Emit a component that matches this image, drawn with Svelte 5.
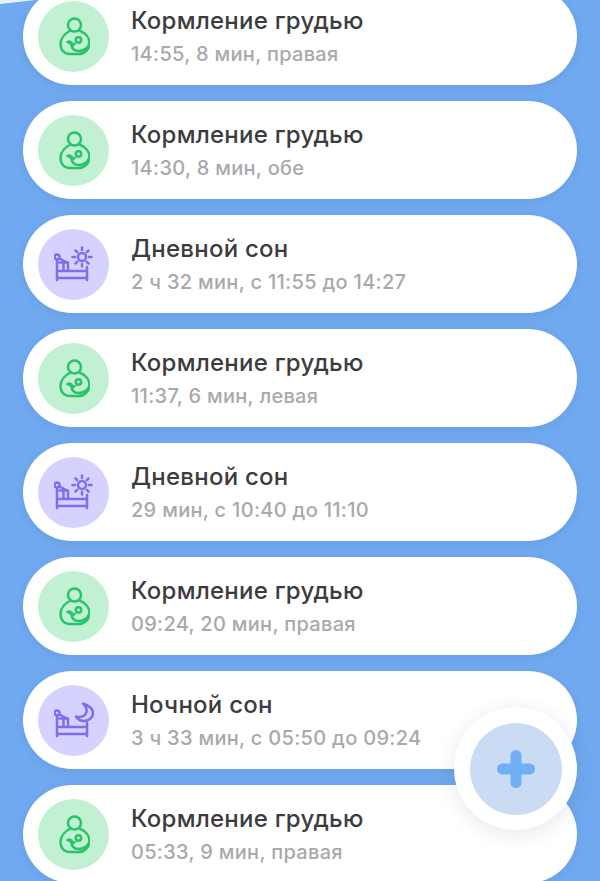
<script>
	const FEED = 'Кормление грудью';
	const DAY = 'Дневной сон';
	const NIGHT = 'Ночной сон';

	const entries = [
		{ kind: 'feed', title: FEED, detail: '14:55, 8 мин, правая' },
		{ kind: 'feed', title: FEED, detail: '14:30, 8 мин, обе' },
		{ kind: 'day', title: DAY, detail: '2 ч 32 мин, с 11:55 до 14:27' },
		{ kind: 'feed', title: FEED, detail: '11:37, 6 мин, левая' },
		{ kind: 'day', title: DAY, detail: '29 мин, с 10:40 до 11:10' },
		{ kind: 'feed', title: FEED, detail: '09:24, 20 мин, правая' },
		{ kind: 'night', title: NIGHT, detail: '3 ч 33 мин, с 05:50 до 09:24' },
		{ kind: 'feed', title: FEED, detail: '05:33, 9 мин, правая' }
	];
</script>

{#snippet bed()}
	<circle cx="3" cy="11" r="2.500" />
	<path d="M3 13.500V34M3 25h30v7H3M33 21v13M5.500 12.500L14 17v8M5.500 16.500H14M9.500 16.500V25" />
{/snippet}

<main class="screen">
	<ul class="list">
		{#each entries as entry}
			<li class="card">
				<div class="badge {entry.kind}">
					{#if entry.kind === 'feed'}
						<svg width="33" height="39" viewBox="-1.500 0 33 39" fill="none">
							<circle cx="16" cy="8" r="6.500" />
							<path d="M12 13.500C7 16 2 21 2 27c0 6 4 10 9 10h9c6 0 11-5 11-11 0-5-4-10-10-12.500" />
							<path d="M31 26c-1 5-6 8-11 8-3 0-5-1-6-3" />
							<path d="M14 31c0-3-1-5-5-6M9 25c2-1 4 0 5 2M13 29l3-2" />
							<circle cx="20" cy="23" r="2.700" />
						</svg>
					{:else if entry.kind === 'day'}
						<svg width="40" height="36" viewBox="0 0 40 36" fill="none">
							{@render bed()}
							<circle cx="28" cy="11" r="4" />
							<path d="M28 1.500v2.500M28 18v2.500M18.500 11H21M35 11h2.500M21.500 4.500l1.700 1.700M32.800 15.800l1.700 1.700M21.500 17.500l1.700-1.700M32.800 6.200l1.700-1.700" />
						</svg>
					{:else}
						<svg width="40" height="36" viewBox="0 0 40 36" fill="none">
							{@render bed()}
							<path d="M29 1.500C35 3 39 7 39 11C39 16 34 19.500 29 19C26 18.700 23.500 17 22 14.500C27 16 31 14 32.500 10C33 7 31.500 3.500 29 1.500Z" />
						</svg>
					{/if}
				</div>
				<div class="text">
					<h3>{entry.title}</h3>
					<p>{entry.detail}</p>
				</div>
			</li>
		{/each}
	</ul>

	<button class="fab" aria-label="Добавить">
		<span class="fab-inner">
			<svg width="38" height="38" viewBox="0 0 38 38">
				<path d="M19 5.500v27M5.500 19h27" />
			</svg>
		</span>
	</button>
</main>

<style>
	:global(body) {
		background: #70a9ef;
		overflow: hidden;
	}

	.screen {
		position: relative;
		height: 881px;
		overflow: hidden;
		background: #70a9ef;
		font-family: Inter, 'Noto Sans', sans-serif;
	}

	/* sliver of the sheet above that peeks out in the top corner */
	.screen::before {
		content: '';
		position: absolute;
		left: 0;
		top: 0;
		width: 100%;
		height: 4px;
		background: #e8f1fc;
		clip-path: polygon(0 0, 36px 0, 0 100%);
	}

	.list {
		list-style: none;
		margin: -13px 0 0;
		padding: 0 23px;
		display: flex;
		flex-direction: column;
		gap: 16px;
		position: relative;
	}

	.card {
		height: 98px;
		flex: none;
		display: flex;
		align-items: center;
		gap: 22px;
		padding-left: 15px;
		background: #fff;
		border-radius: 49px;
		box-shadow: 0 2px 8px rgba(40, 80, 140, 0.12);
	}

	.badge {
		width: 71px;
		height: 71px;
		flex: none;
		border-radius: 50%;
		display: flex;
		align-items: center;
		justify-content: center;
	}

	.badge.feed {
		background: #c1f0d2;
	}

	.badge.day,
	.badge.night {
		background: #d5d2ff;
	}

	.badge svg {
		stroke-width: 2.5;
		stroke-linecap: round;
		stroke-linejoin: round;
	}

	.badge.feed svg {
		stroke: #27c468;
	}

	.badge.day svg,
	.badge.night svg {
		stroke: #7a70ee;
	}

	h3 {
		margin: 0;
		font-size: 24px;
		letter-spacing: 0.25px;
		line-height: 28px;
		font-weight: 500;
		color: #3c3c3e;
	}

	p {
		margin: 7px 0 0;
		font-size: 20px;
		letter-spacing: 0.3px;
		line-height: 24px;
		font-weight: 500;
		color: #a9a9ab;
	}

	.fab {
		position: absolute;
		left: 454px;
		top: 707px;
		width: 123px;
		height: 123px;
		padding: 0;
		border: 0;
		border-radius: 50%;
		background: #fff;
		display: flex;
		align-items: center;
		justify-content: center;
		box-shadow: 0 4px 20px rgba(40, 60, 100, 0.12);
	}

	.fab-inner {
		width: 92px;
		height: 92px;
		border-radius: 50%;
		background: #c9dcf4;
		display: flex;
		align-items: center;
		justify-content: center;
	}

	.fab svg {
		stroke: #70aef5;
		stroke-width: 11;
		stroke-linecap: round;
		fill: none;
	}
</style>
